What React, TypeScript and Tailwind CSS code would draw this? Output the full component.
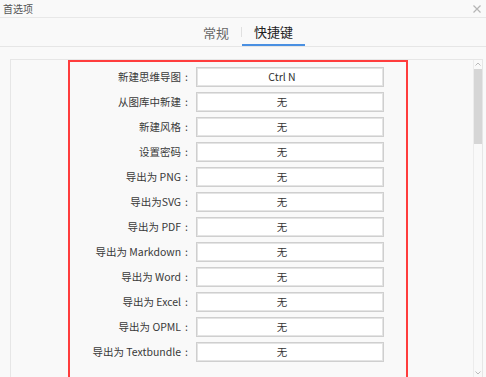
import React from 'react';

const rows: { label: string; value: string }[] = [
    { label: '新建思维导图', value: 'Ctrl N' },
    { label: '从图库中新建', value: '无' },
    { label: '新建风格', value: '无' },
    { label: '设置密码', value: '无' },
    { label: '导出为 PNG', value: '无' },
    { label: '导出为SVG', value: '无' },
    { label: '导出为 PDF', value: '无' },
    { label: '导出为 Markdown', value: '无' },
    { label: '导出为 Word', value: '无' },
    { label: '导出为 Excel', value: '无' },
    { label: '导出为 OPML', value: '无' },
    { label: '导出为 Textbundle', value: '无' },
];

const ShortcutRow: React.FC<{ label: string; value: string }> = ({ label, value }) => (
    <div className="flex items-center h-[20px] mb-[5px]">
        <div className="w-[118px] text-right text-[10.5px] leading-none text-[#3a3a3a] whitespace-nowrap">
            {label}
            <span className="ml-[4px]">:</span>
        </div>
        <div className="ml-[8px] w-[188px] h-[20px] bg-white border border-[#cfcfcf] shadow-[inset_0_0_0_1px_#e4e4e4] flex items-center justify-center pr-[16px] text-[10.5px] leading-none text-[#333]">
            {value}
        </div>
    </div>
);

export default function App() {
    return (
        <div className="w-[486px] h-[377px] overflow-hidden bg-[#f9f9f9] text-[#333] font-['Noto_Sans_CJK_SC','Noto_Sans',sans-serif] flex flex-col">
            {/* title bar */}
            <div className="h-[18px] shrink-0 border-b border-[#e8e8e8] flex items-center justify-between pl-[3px] pr-[5px]">
                <span className="text-[10px] leading-none text-[#555]">首选项</span>
                <svg width="8" height="8" viewBox="0 0 8 8" className="text-[#b5b5b5]">
                    <path d="M0.5 0.5L7.5 7.5M7.5 0.5L0.5 7.5" stroke="currentColor" strokeWidth="1.2" />
                </svg>
            </div>

            {/* tabs */}
            <div className="h-[29px] shrink-0 border-b border-[#e6e6e6] flex justify-center items-stretch pl-[10px]">
                <div className="px-[12px] flex items-center text-[13px] text-[#666] pt-[1px]">常规</div>
                <div className="w-px bg-[#e0e0e0] my-[9px]" />
                <div className="px-[12px] flex items-center text-[13px] text-[#222] pt-[1px] border-b-2 border-[#4a90e2]">快捷键</div>
            </div>

            {/* content panel */}
            <div className="mt-[12px] ml-[10px] mr-[3px] flex-1 border border-[#e6e6e6] border-b-0 flex min-h-0">
                <div className="flex-1 min-w-0">
                    <div className="ml-[57px] w-[340px] h-[330px] border-2 border-[#ff3d3d] pt-[5px]">
                        {rows.map((r) => (
                            <ShortcutRow key={r.label} label={r.label} value={r.value} />
                        ))}
                    </div>
                </div>
                <div className="w-[9px] border-l border-[#ececec] flex flex-col items-center relative">
                    <svg width="6" height="4" viewBox="0 0 6 4" className="mt-[2px] text-[#bbb]">
                        <path d="M0.5 3.5L3 1L5.5 3.5" stroke="currentColor" fill="none" strokeWidth="1" />
                    </svg>
                    <div className="mt-[3px] w-[8px] h-[75px] bg-[#d6d6d6]" />
                    <svg width="6" height="4" viewBox="0 0 6 4" className="absolute bottom-[2px] text-[#bbb]">
                        <path d="M0.5 0.5L3 3L5.5 0.5" stroke="currentColor" fill="none" strokeWidth="1" />
                    </svg>
                </div>
            </div>
        </div>
    );
}
